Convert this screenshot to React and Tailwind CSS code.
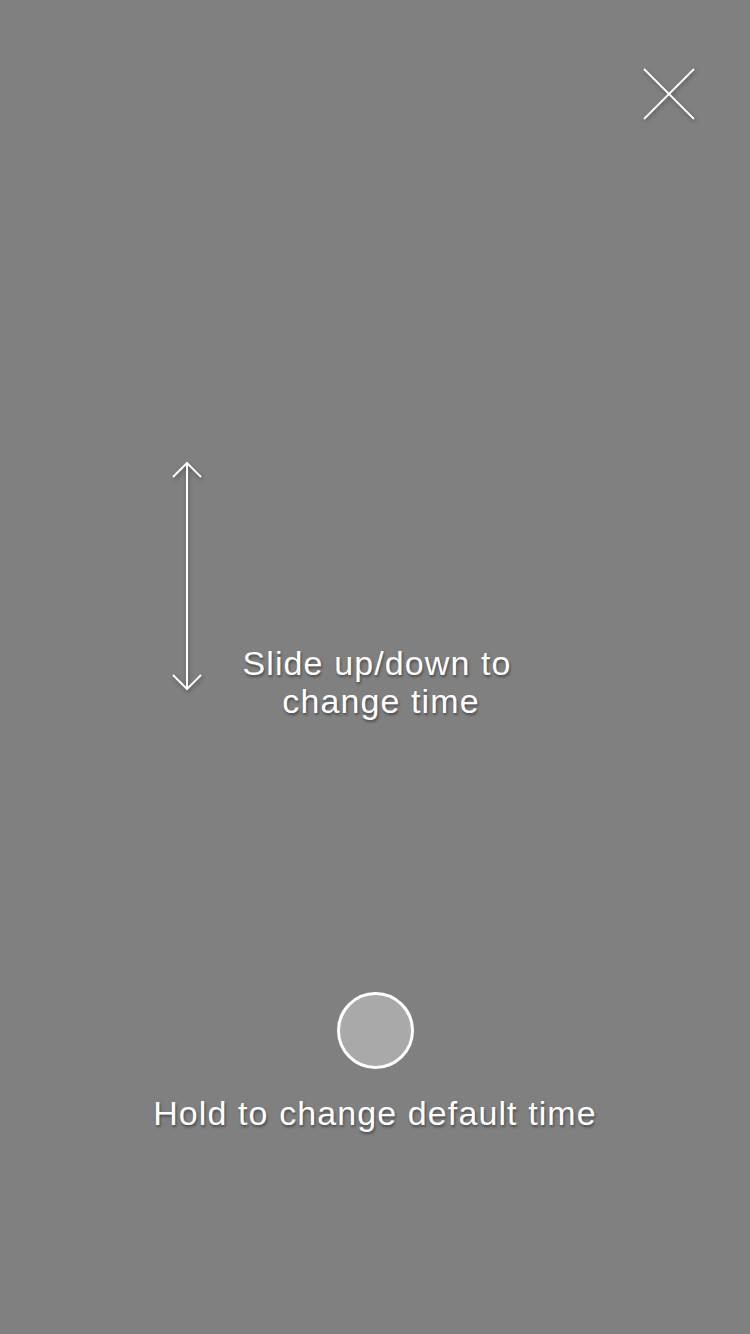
export default function App() {
  const shadow = { textShadow: "1px 2px 3px rgba(0,0,0,0.45)" };
  return (
    <div className="w-[750px] h-[1334px] bg-[#808080] flex flex-col overflow-hidden" style={{ fontFamily: '"Liberation Sans", Arial, sans-serif' }}>
      <div className="flex justify-end pt-[67px] pr-[54px]">
        <svg width="54" height="54" viewBox="0 0 54 54" className="drop-shadow-[1px_2px_2px_rgba(0,0,0,0.35)]">
          <line x1="2" y1="2" x2="52" y2="52" stroke="white" strokeWidth="2" />
          <line x1="52" y1="2" x2="2" y2="52" stroke="white" strokeWidth="2" />
        </svg>
      </div>
      <div className="flex items-start mt-[339px]">
        <svg width="30" height="232" viewBox="0 0 30 232" className="ml-[172px] drop-shadow-[1px_2px_2px_rgba(0,0,0,0.35)]">
          <line x1="15" y1="3" x2="15" y2="229" stroke="white" strokeWidth="2" />
          <polyline points="1,17 15,3 29,17" fill="none" stroke="white" strokeWidth="2" />
          <polyline points="1,215 15,229 29,215" fill="none" stroke="white" strokeWidth="2" />
        </svg>
        <div className="w-[350px] mt-[184px] text-center text-white text-[34px] leading-[38px] tracking-[1.1px]" style={shadow}>
          <div>Slide up/down to</div>
          <div className="pl-[8px]">change time</div>
        </div>
      </div>
      <div className="flex justify-center mt-[272px]">
        <div className="w-[77px] h-[77px] rounded-full bg-[#a9a9a9] border-[3px] border-white"></div>
      </div>
      <div className="mt-[25px] text-center text-white text-[34px] leading-[38px] tracking-[1.1px]" style={shadow}>
        Hold to change default time
      </div>
    </div>
  );
}
